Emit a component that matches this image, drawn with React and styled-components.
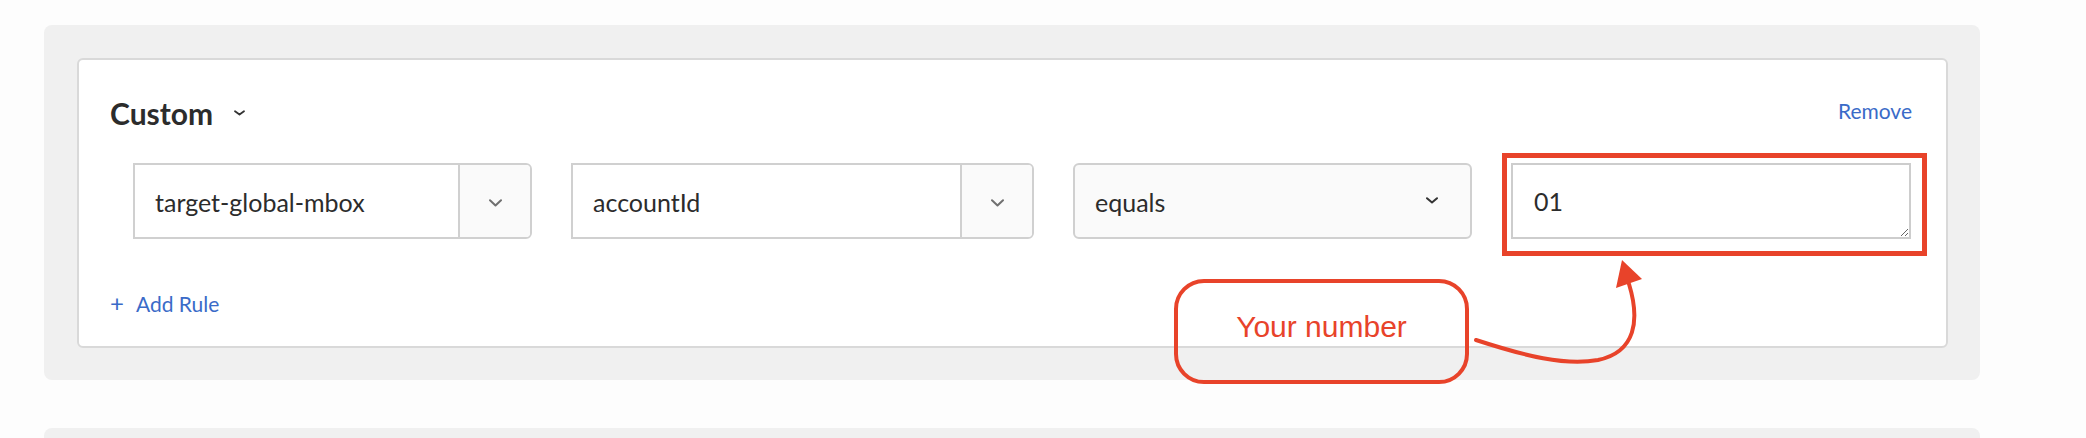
import styled, { createGlobalStyle } from 'styled-components';

const GlobalStyle = createGlobalStyle`
    html, body {
        margin: 0;
        padding: 0;
        overflow: hidden;
        background: #fdfdfd;
        font-family: Lato, "Open Sans", sans-serif;
    }
`

const Page = styled.div`
    position: relative;
    padding: 25px 0 0 44px;
    height: 438px;
    box-sizing: border-box;
    overflow: hidden;
`

const Panel = styled.section`
    width: 1936px;
    box-sizing: border-box;
    background: #f0f0f0;
    border-radius: 8px;
    padding: 33px 32px 32px 33px;

    &.next {
        margin-top: 48px;
        height: 40px;
    }
`

const Card = styled.div`
    background: #ffffff;
    border: 2px solid #d9d9d9;
    border-radius: 6px;
    padding: 35px 34px 30px 31px;
`

const CardHeader = styled.div`
    display: flex;
    justify-content: space-between;
    align-items: flex-start;
    height: 36px;
`

const TitleGroup = styled.div`
    display: flex;
    align-items: center;
    gap: 21px;
`

const Title = styled.h2`
    margin: 0;
    font-size: 30px;
    line-height: 36px;
    font-weight: 700;
    color: #2c2c2c;
`

const LinkButton = styled.button`
    margin-top: 3px;
    padding: 0;
    border: none;
    background: none;
    font-family: inherit;
    font-size: 21px;
    line-height: 25px;
    color: #3a6bc8;
    cursor: pointer;
`

const RuleRow = styled.div`
    display: grid;
    grid-template-columns: 399px 463px 399px 400px;
    column-gap: 39px;
    height: 75px;
    margin-top: 32px;
    padding-left: 23px;
`

const ComboBox = styled.div`
    display: flex;
    border: 2px solid #d0d0d0;
    border-radius: 0 6px 6px 0;
    background: #ffffff;
    overflow: hidden;
`

const ComboInput = styled.div`
    flex: 1;
    display: flex;
    align-items: center;
    padding: 2px 0 0 20px;
    font-size: 25px;
    color: #2c2c2c;
`

const ComboButton = styled.div`
    width: 72px;
    box-sizing: border-box;
    border-left: 2px solid #d0d0d0;
    background: #fafafa;
    display: flex;
    align-items: center;
    justify-content: center;
    padding-top: 4px;
`

const Picker = styled.div`
    display: flex;
    align-items: center;
    justify-content: space-between;
    border: 2px solid #d0d0d0;
    border-radius: 6px;
    background: #fafafa;
    padding: 2px 32px 0 20px;
    font-size: 25px;
    color: #2c2c2c;

    svg {
        margin-bottom: 4px;
    }
`

const ValueField = styled.div`
    position: relative;

    &:after {
        content: '';
        position: absolute;
        top: -10px;
        left: -9px;
        right: -16px;
        bottom: -17px;
        border: 5px solid #e8432a;
        pointer-events: none;
    }
`

const TextArea = styled.textarea`
    display: block;
    width: 400px;
    height: 76px;
    box-sizing: border-box;
    border: 2px solid #cdcdcd;
    border-radius: 0;
    padding: 21px 21px 0 21px;
    font-family: inherit;
    font-size: 25px;
    line-height: 30px;
    color: #2c2c2c;
    background: #ffffff;
    outline: none;
`

const AddRule = styled.button`
    display: flex;
    align-items: center;
    gap: 12px;
    margin-top: 53px;
    padding: 0;
    border: none;
    background: none;
    font-family: inherit;
    font-size: 21px;
    line-height: 25px;
    color: #3a6bc8;
    cursor: pointer;
`

const Plus = styled.span`
    font-size: 24px;
    margin-top: -3px;
`

const Callout = styled.div`
    position: absolute;
    left: 1174px;
    top: 279px;
    width: 295px;
    height: 105px;
    box-sizing: border-box;
    border: 4px solid #e8432a;
    border-radius: 30px;
    display: flex;
    align-items: center;
    justify-content: center;
    padding-bottom: 9px;
    font-family: "Liberation Sans", Arial, sans-serif;
    font-size: 30px;
    color: #e8432a;
`

const ArrowLayer = styled.svg`
    position: absolute;
    left: 0;
    top: 0;
    pointer-events: none;
`

function Chevron({ color = '#707070', w = 13, h = 8, stroke = 2 }) {
    return (
        <svg width={w} height={h} viewBox={`0 0 ${w} ${h}`}>
            <polyline
                points={`1,1.2 ${w / 2},${h - 1.5} ${w - 1},1.2`}
                fill="none"
                stroke={color}
                strokeWidth={stroke}
                strokeLinecap="round"
                strokeLinejoin="round"
            />
        </svg>
    )
}

function App() {
    return (
        <Page>
            <GlobalStyle />
            <Panel>
                <Card>
                    <CardHeader>
                        <TitleGroup>
                            <Title>Custom</Title>
                            <Chevron color="#333" w={11} h={6} stroke={1.8} />
                        </TitleGroup>
                        <LinkButton>Remove</LinkButton>
                    </CardHeader>

                    <RuleRow>
                        <ComboBox>
                            <ComboInput>target-global-mbox</ComboInput>
                            <ComboButton><Chevron /></ComboButton>
                        </ComboBox>
                        <ComboBox>
                            <ComboInput>accountId</ComboInput>
                            <ComboButton><Chevron /></ComboButton>
                        </ComboBox>
                        <Picker>
                            equals
                            <Chevron color="#333" w={12} h={7} stroke={2} />
                        </Picker>
                        <ValueField>
                            <TextArea defaultValue="01" />
                        </ValueField>
                    </RuleRow>

                    <AddRule><Plus>+</Plus>Add Rule</AddRule>
                </Card>
            </Panel>

            <Panel className="next" />

            <Callout>Your number</Callout>
            <ArrowLayer width="2086" height="438" viewBox="0 0 2086 438">
                <path
                    d="M1476 340 C1525 356, 1565 366, 1598 360 C1636 352, 1640 320, 1629 284"
                    fill="none"
                    stroke="#e8432a"
                    strokeWidth="4"
                    strokeLinecap="round"
                />
                <polygon points="1622,260 1616,288 1642,279" fill="#e8432a" />
            </ArrowLayer>
        </Page>
    );
}

export default App;
